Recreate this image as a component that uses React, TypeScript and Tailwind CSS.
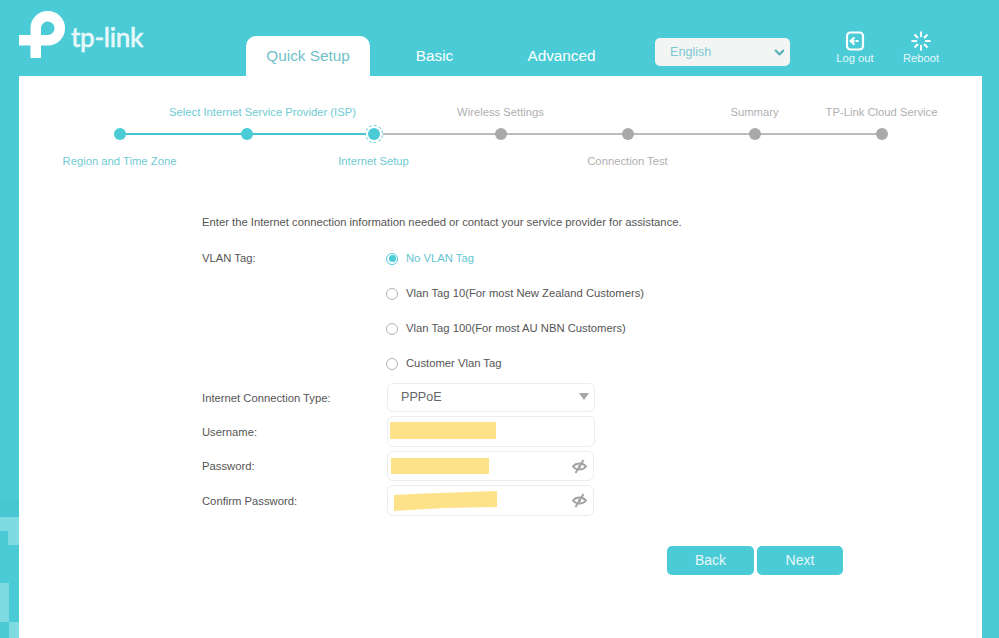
import React from "react";
import { ChevronDown } from "lucide-react";

const topSteps = ["", "Select Internet Service Provider (ISP)", "", "Wireless Settings", "", "Summary", "TP-Link Cloud Service"];
const bottomSteps = ["Region and Time Zone", "", "Internet Setup", "", "Connection Test", "", ""];

function StepLabel({ text, index }: { text: string; index: number }) {
    return (
        <div className={`flex justify-center whitespace-nowrap ${index <= 2 ? "text-[#6fcbd3]" : "text-[#b0b0b0]"}`}>
            {text}
        </div>
    );
}

function Stepper() {
    return (
        <div className="ml-[37px] w-[889px] text-[11.25px] leading-[14px]">
            <div className="grid grid-cols-[repeat(7,127px)]">
                {topSteps.map((t, i) => (
                    <div key={i} className={i === 1 ? "pl-[32px]" : ""}>
                        <StepLabel text={t} index={i} />
                    </div>
                ))}
            </div>
            <div className="mb-[11px] mt-[6px] grid h-[18px] grid-cols-[repeat(7,127px)]">
                {topSteps.map((_, i) => (
                    <div key={i} className="relative flex items-center justify-center">
                        {i < 6 && (
                            <div className={`absolute left-1/2 h-[2px] w-[127px] ${i < 2 ? "bg-[#4bc3ce]" : "bg-[#bcbcbc]"}`} />
                        )}
                        {i === 2 && (
                            <div className="absolute h-[18px] w-[18px] rounded-full border-[1.5px] border-dashed border-[#4acbd6] bg-white" />
                        )}
                        <div className={`relative h-[12px] w-[12px] rounded-full ${i <= 2 ? "bg-[#4acbd6]" : "bg-[#a9a9a9]"}`} />
                    </div>
                ))}
            </div>
            <div className="grid grid-cols-[repeat(7,127px)]">
                {bottomSteps.map((t, i) => (
                    <StepLabel key={i} text={t} index={i} />
                ))}
            </div>
        </div>
    );
}

function Radio({ label, checked }: { label: string; checked?: boolean }) {
    return (
        <div className={`flex h-[35px] items-center gap-[7px] ${checked ? "text-[#64c6cf]" : "text-[#555]"}`}>
            <span className={`flex h-[12px] w-[12px] -translate-x-px items-center justify-center rounded-full border ${checked ? "border-[#4acbd6]" : "border-[#b5b5b5]"}`}>
                {checked && <span className="h-[7px] w-[7px] rounded-full bg-[#4acbd6]" />}
            </span>
            {label}
        </div>
    );
}

function Row({ label, children, rowClass }: { label: string; children: React.ReactNode; rowClass: string }) {
    return (
        <div className={`flex items-center ${rowClass}`}>
            <div className="w-[185px] pt-px text-[#555]">{label}</div>
            {children}
        </div>
    );
}

function Eye() {
    return (
        <svg width="15" height="15" viewBox="0 0 15 15" fill="none" stroke="#a3a3a3" strokeWidth="2">
            <path d="M1 7.500C4 3.500 11 3.500 14 7.500C11 11.500 4 11.500 1 7.500Z" />
            <circle cx="7.500" cy="7.500" r="1.500" fill="#a3a3a3" stroke="none" />
            <path d="M3.500 14L11.500 1" />
        </svg>
    );
}

export default function App() {
    return (
        <div className="relative flex h-[638px] w-[999px] flex-col overflow-hidden bg-[#4acbd6] font-['Liberation_Sans',Arial,sans-serif]">
            {/* blocky pattern bottom left of the background */}
            <svg className="absolute left-0 top-0" width="19" height="638" fill="#7fdbe2">
                <rect x="0" y="500" width="19" height="17" fill="#47c7d2" />
                <path d="M0 517H19V545H8V531H0Z" />
                <rect x="0" y="583" width="9" height="39" />
                <rect x="9" y="622" width="10" height="16" />
            </svg>

            <header className="relative flex h-[76px] shrink-0 items-end">
                <div className="flex h-full w-[246px] shrink-0 items-start pl-[19px] pt-[11px]">
                    <svg width="47" height="48" viewBox="0 0 47 48" fill="none" stroke="#fff" strokeWidth="10.5">
                        <path d="M16.750 47V17.250A12 12 0 1 1 28.750 29.250H0" />
                    </svg>
                    <span className="ml-[5px] mt-[10px] font-['Lato',sans-serif] text-[26px] font-medium leading-[32px] tracking-[-0.3px] text-[#e6f8fa] [-webkit-text-stroke:0.5px_#e6f8fa]">
                        tp-link
                    </span>
                </div>
                <nav className="flex gap-[2px] text-[15.3px]">
                    <div className="flex h-[40px] w-[124px] items-center justify-center rounded-t-[10px] bg-white text-[#6fbfc8]">
                        Quick Setup
                    </div>
                    <div className="flex h-[40px] w-[125px] items-center justify-center text-white">Basic</div>
                    <div className="flex h-[40px] w-[125px] items-center justify-center text-white">Advanced</div>
                </nav>
                <div className="mb-[10px] ml-[31px] flex h-[28px] w-[135px] items-center justify-between rounded-[5px] bg-[#f3f5f5] pl-[15px] pr-[3px] text-[12.6px] text-[#7cc8cf]">
                    English
                    <ChevronDown className="h-[15px] w-[15px] text-[#5fb3bc]" strokeWidth={3.5} />
                </div>
                <div className="mb-[11px] ml-[40px] flex w-[50px] flex-col items-center text-[11.2px] leading-[13px] text-[#e6f8fa]">
                    <svg width="20" height="20" viewBox="0 0 20 20" fill="none" stroke="#fff" className="mb-px">
                        <rect x="2" y="1.500" width="16" height="17" rx="3.500" strokeWidth="2.200" />
                        <path d="M5.500 10H14" strokeWidth="2" strokeDasharray="4 1 3" />
                        <path d="M9.500 6.500L5.500 10L9.500 13.500" strokeWidth="2" />
                    </svg>
                    Log out
                </div>
                <div className="mb-[11px] ml-[16px] flex w-[50px] flex-col items-center text-[11.2px] leading-[13px] text-[#e6f8fa]">
                    <svg width="20" height="20" viewBox="0 0 20 20" fill="none" stroke="#fff" strokeWidth="2" className="mb-px">
                        <path d="M10 0.500V6M10 14V19.500M0.500 10H6M14 10H19.500M3.500 3.500L7 7M13 13L16.500 16.500M3.500 16.500L7 13M13 7L16.500 3.500" />
                    </svg>
                    Reboot
                </div>
            </header>

            <main className="relative ml-[19px] w-[963px] flex-1 bg-white pt-[29px] text-[11.25px]">
                <Stepper />
                <div className="ml-[183px] mt-[47px]">
                    <p className="leading-[14px] text-[#555]">
                        Enter the Internet connection information needed or contact your service provider for assistance.
                    </p>
                    <div className="mt-[12px] flex">
                        <div className="flex h-[35px] w-[185px] items-center text-[#555]">VLAN Tag:</div>
                        <div>
                            <Radio label="No VLAN Tag" checked />
                            <Radio label="Vlan Tag 10(For most New Zealand Customers)" />
                            <Radio label="Vlan Tag 100(For most AU NBN Customers)" />
                            <Radio label="Customer Vlan Tag" />
                        </div>
                    </div>
                    <Row label="Internet Connection Type:" rowClass="h-[29px] mt-[2px]">
                        <div className="flex h-[29px] w-[208px] items-center justify-between rounded-md border border-[#ececec] pl-[13px] pr-[5px] text-[12.6px] text-[#666]">
                            PPPoE
                            <span className="h-0 w-0 -translate-y-px border-x-[5.5px] border-t-[7px] border-x-transparent border-t-[#a6a6a6]" />
                        </div>
                    </Row>
                    <Row label="Username:" rowClass="h-[31px] mt-[4px]">
                        <div className="flex h-[31px] w-[208px] items-center rounded-md border border-[#ececec] pl-[2px]">
                            <span className="mb-[2px] h-[17px] w-[106px] bg-[#fde28a]" />
                        </div>
                    </Row>
                    <Row label="Password:" rowClass="h-[30px] mt-[4px]">
                        <div className="flex h-[30px] w-[207px] items-center justify-between rounded-md border border-[#ececec] pl-[3px] pr-[6px]">
                            <span className="h-[16px] w-[98px] bg-[#fde28a]" />
                            <Eye />
                        </div>
                    </Row>
                    <Row label="Confirm Password:" rowClass="h-[31px] mt-[4px]">
                        <div className="flex h-[31px] w-[207px] items-center justify-between rounded-md border border-[#ececec] pl-[6px] pr-[6px]">
                            <svg width="104" height="20" fill="#fde28a">
                                <path d="M0 4L30 2.500L103 0V16L50 17L0 20Z" />
                            </svg>
                            <Eye />
                        </div>
                    </Row>
                </div>
                <div className="ml-[648px] mt-[30px] flex gap-[3px] text-[14px] text-[#e6f8fa]">
                    <div className="flex h-[29px] w-[87px] items-center justify-center rounded-[5px] bg-[#4acbd6]">Back</div>
                    <div className="flex h-[29px] w-[86px] items-center justify-center rounded-[5px] bg-[#4acbd6]">Next</div>
                </div>
            </main>
        </div>
    );
}
